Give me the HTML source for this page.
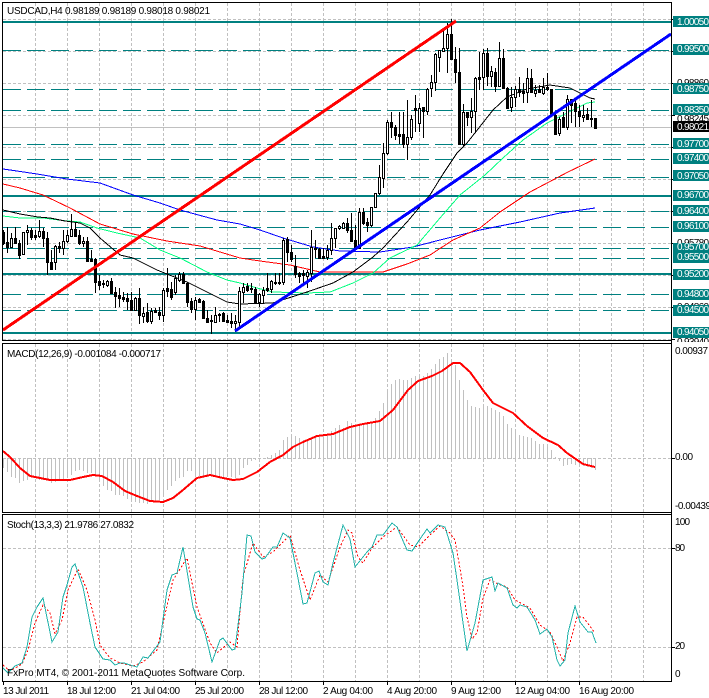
<!DOCTYPE html>
<html><head><meta charset="utf-8"><title>USDCAD,H4</title>
<style>
html,body{margin:0;padding:0;background:#fff;width:709px;height:698px;overflow:hidden}
svg{display:block}
text{font-family:"Liberation Sans",Arial,sans-serif;font-size:10px;fill:#000}
.w{fill:#fff}
.l{fill:none;stroke-width:1;shape-rendering:crispEdges}
</style></head><body>
<svg width="709" height="698" viewBox="0 0 709 698" xmlns="http://www.w3.org/2000/svg">
<rect width="709" height="698" fill="#fff"/>
<!-- grid -->
<path class="l" stroke="#c0c0c0" stroke-dasharray="3 2" d="M35.5 3V340M67.5 3V340M99.5 3V340M131.5 3V340M163.5 3V340M195.5 3V340M227.5 3V340M259.5 3V340M291.5 3V340M323.5 3V340M355.5 3V340M387.5 3V340M419.5 3V340M451.5 3V340M483.5 3V340M515.5 3V340M547.5 3V340M579.5 3V340M611.5 3V340M643.5 3V340
M35.5 344V512M67.5 344V512M99.5 344V512M131.5 344V512M163.5 344V512M195.5 344V512M227.5 344V512M259.5 344V512M291.5 344V512M323.5 344V512M355.5 344V512M387.5 344V512M419.5 344V512M451.5 344V512M483.5 344V512M515.5 344V512M547.5 344V512M579.5 344V512M611.5 344V512M643.5 344V512
M35.5 515V681M67.5 515V681M99.5 515V681M131.5 515V681M163.5 515V681M195.5 515V681M227.5 515V681M259.5 515V681M291.5 515V681M323.5 515V681M355.5 515V681M387.5 515V681M419.5 515V681M451.5 515V681M483.5 515V681M515.5 515V681M547.5 515V681M579.5 515V681M611.5 515V681M643.5 515V681
M3 19.5H671M3 51.5H671M3 83.5H671M3 115.5H671M3 147.5H671M3 179.5H671M3 211.5H671M3 243.5H671M3 275.5H671M3 307.5H671M3 339.5H671M3 458.5H671M3 548.5H671M3 647.5H671"/>
<!-- price levels -->
<path class="l" stroke="#008080" stroke-dasharray="18 6" d="M3 50.5H671M3 89.5H671M3 110.5H671M3 144.5H671M3 159.5H671M3 177.5H671M3 211.5H671M3 227.5H671M3 248.5H671M3 258.5H671M3 294.5H671M3 310.5H671"/>
<path fill="#008080" d="M3 21H671V23H3zM3 195H671V197H3zM3 273H671V275H3zM3 332H671V334H3z"/>
<path class="l" stroke="#c0c0c0" d="M3 127.5H671"/>
<!-- MACD histogram -->
<path class="l" stroke="#c0c0c0" d="M3.5 458V468M7.5 458V472M11.5 458V477M15.5 458V478M19.5 458V483M23.5 458V481M27.5 458V480M31.5 458V477M35.5 458V477M39.5 458V480M43.5 458V480M47.5 458V480M51.5 458V483M55.5 458V482M59.5 458V481M63.5 458V480M67.5 458V478M71.5 458V475M75.5 458V471M79.5 458V470M83.5 458V471M87.5 458V473M91.5 458V473M95.5 458V476M99.5 458V480M103.5 458V486M107.5 458V490M111.5 458V491M115.5 458V495M119.5 458V495M123.5 458V496M127.5 458V499M131.5 458V501M135.5 458V502M139.5 458V503M143.5 458V503M147.5 458V504M151.5 458V502M155.5 458V501M159.5 458V500M163.5 458V495M167.5 458V490M171.5 458V486M175.5 458V481M179.5 458V478M183.5 458V477M187.5 458V471M191.5 458V471M195.5 458V475M199.5 458V476M203.5 458V478M207.5 458V477M211.5 458V475M215.5 458V477M219.5 458V477M223.5 458V478M227.5 458V476M231.5 458V477M235.5 458V478M239.5 458V475M243.5 458V468M247.5 458V465M251.5 458V461M255.5 458V460M259.5 458V459
M267.5 459V457M271.5 459V455M275.5 459V453M279.5 459V450M283.5 459V440M287.5 459V437M291.5 459V434M295.5 459V436M299.5 459V438M303.5 459V440M307.5 459V439M311.5 459V438M315.5 459V436M319.5 459V435M323.5 459V435M327.5 459V435M331.5 459V431M335.5 459V428M339.5 459V425M343.5 459V428M347.5 459V421M351.5 459V423M355.5 459V425M359.5 459V425M363.5 459V425M367.5 459V423M371.5 459V423M375.5 459V418M379.5 459V411M383.5 459V403M387.5 459V391M391.5 459V384M395.5 459V380M399.5 459V379M403.5 459V380M407.5 459V380M411.5 459V378M415.5 459V376M419.5 459V375M423.5 459V376M427.5 459V373M431.5 459V369M435.5 459V364M439.5 459V359M443.5 459V357M447.5 459V353M451.5 459V360M455.5 459V365M459.5 459V380M463.5 459V390M467.5 459V400M471.5 459V406M475.5 459V407M479.5 459V408M483.5 459V404M487.5 459V406M491.5 459V408M495.5 459V410M499.5 459V412M503.5 459V416M507.5 459V424M511.5 459V428M515.5 459V430M519.5 459V435M523.5 459V436M527.5 459V437M531.5 459V438M535.5 459V441M539.5 459V444M543.5 459V444M547.5 459V445M551.5 459V450M555.5 459V457
M559.5 458V461M563.5 458V466M567.5 458V465M571.5 458V464M575.5 458V465M579.5 458V466M583.5 458V466M587.5 458V467M591.5 458V468M595.5 458V470"/>
<!-- moving averages -->
<polyline class="l" stroke="#0000ff" points="3,169 17,171 37,174 67,179 100,183 133,195 160,203 180,210 217,220 240,224 260,230 283,238 313,247 340,251 380,252 413,247 440,240 480,230 520,222 560,213 595,208"/>
<polyline class="l" stroke="#ff0000" points="3,184 20,188 43,195 70,208 100,224 133,234 167,241 200,246 240,258 260,261 290,265 320,272 373,272 383,272 407,264 430,255 453,240 480,228 500,212 530,192 568,172 595,159"/>
<polyline class="l" stroke="#00ff7f" points="3,216 20,218 43,218 67,221 80,222 97,228 117,233 140,238 160,250 180,258 207,272 227,280 240,283 257,288 273,292 307,293 330,292 353,283 373,273 390,258 417,245 440,218 460,195 485,175 503,158 523,140 547,123 567,113 587,103 595,102"/>
<polyline class="l" stroke="#000" points="3,210 20,214 38,217 50,218 65,221 80,223 90,228 100,238 120,255 133,258 157,270 167,274 187,282 207,292 227,302 240,304 273,303 307,292 333,283 353,272 373,257 383,248 407,222 430,195 443,174 457,153 467,143 493,110 507,97 527,89 550,85 570,88 590,98 595,99"/>
<!-- candle wicks -->
<path class="l" stroke="#000" d="M3.5 230V245M7.5 227V253M11.5 233V248M15.5 227V243M19.5 240V259M23.5 232V255M27.5 225V245M31.5 228V240M35.5 230V240M39.5 220V238M43.5 228V247M47.5 232V275M51.5 250V270M55.5 245V270M59.5 242V253M63.5 230V255M67.5 230V243M71.5 214V237M75.5 222V237M79.5 230V245M83.5 237V247M87.5 237V262M91.5 250V262M95.5 258V293M99.5 275V290M103.5 280V288M107.5 280V287M111.5 278V293M115.5 287V308M119.5 288V307M123.5 292V302M127.5 293V310M131.5 292V311M135.5 297V311M139.5 288V324M143.5 307V323M147.5 303V323M151.5 308V324M155.5 308V313M159.5 307V320M163.5 288V322M167.5 268V297M171.5 282V300M175.5 275V295M179.5 272V282M183.5 272V283M187.5 282V307M191.5 298V313M195.5 297V320M199.5 298V303M203.5 300V319M207.5 310V323M211.5 315V334M215.5 307V323M219.5 313V322M223.5 312V322M227.5 315V323M231.5 313V328M235.5 315V332M239.5 287V328M243.5 283V303M247.5 283V292M251.5 283V293M255.5 287V303M259.5 293V307M263.5 287V303M267.5 273V292M271.5 280V293M275.5 273V285M279.5 273V285M283.5 238V285M287.5 237V262M291.5 245V262M295.5 255V278M299.5 272V283M303.5 270V283M307.5 270V288M311.5 230V282M315.5 240V258M319.5 248V258M323.5 248V258M327.5 245V260M331.5 223V255M335.5 228V248M339.5 225V230M343.5 222V228M347.5 218V233M351.5 213V242M355.5 225V248M359.5 208V248M363.5 208V225M367.5 218V232M371.5 207V227M375.5 193V208M379.5 165V195M383.5 143V188M387.5 120V155M391.5 112V138M395.5 125V140M399.5 112V144M403.5 112V148M407.5 100V160M411.5 115V140M415.5 95V132M419.5 103V132M423.5 107V138M427.5 88V115M431.5 75V97M435.5 53V91M439.5 50V72M443.5 28V52M447.5 23V73M451.5 19V60M455.5 47V83M459.5 48V145M463.5 104V147M467.5 112V126M471.5 98V133M475.5 77V133M479.5 52V90M483.5 49V90M487.5 48V86M491.5 66V87M495.5 68V92M499.5 42V87M503.5 49V89M507.5 87V108M511.5 87V112M515.5 86V107M519.5 77V97M523.5 83V103M527.5 68V103M531.5 69V93M535.5 85V97M539.5 85V93M543.5 78V95M547.5 73V91M551.5 89V115M555.5 113V135M559.5 117V136M563.5 112V128M567.5 95V130M571.5 99V123M575.5 100V127M579.5 105V127M583.5 105V122M587.5 108V120M591.5 100V127"/>
<!-- black bodies -->
<path fill="#000" shape-rendering="crispEdges" d="M2 232h3V244h-3zM6 242h3V248h-3zM14 238h3V244h-3zM18 243h3V256h-3zM30 230h3V238h-3zM34 235h3V238h-3zM42 231h3V239h-3zM46 238h3V263h-3zM50 262h3V270h-3zM58 246h3V249h-3zM74 229h3V237h-3zM78 235h3V244h-3zM86 241h3V262h-3zM90 259h3V262h-3zM94 259h3V283h-3zM98 281h3V286h-3zM102 283h3V285h-3zM110 281h3V294h-3zM114 292h3V297h-3zM118 295h3V299h-3zM122 297h3V300h-3zM126 298h3V302h-3zM130 300h3V311h-3zM138 298h3V316h-3zM146 312h3V322h-3zM154 310h3V313h-3zM158 312h3V316h-3zM166 288h3V292h-3zM170 289h3V298h-3zM182 274h3V284h-3zM186 283h3V303h-3zM190 301h3V310h-3zM198 299h3V303h-3zM202 301h3V319h-3zM206 318h3V323h-3zM210 320h3V322h-3zM218 314h3V316h-3zM222 313h3V322h-3zM226 320h3V323h-3zM230 321h3V324h-3zM246 286h3V291h-3zM250 288h3V290h-3zM254 289h3V303h-3zM266 288h3V291h-3zM274 282h3V284h-3zM278 282h3V284h-3zM286 239h3V253h-3zM290 252h3V260h-3zM294 266h3V275h-3zM298 273h3V277h-3zM302 273h3V276h-3zM314 248h3V250h-3zM318 249h3V259h-3zM322 256h3V259h-3zM346 223h3V231h-3zM350 230h3V242h-3zM354 240h3V249h-3zM362 212h3V224h-3zM366 222h3V226h-3zM390 122h3V128h-3zM394 127h3V136h-3zM398 134h3V137h-3zM402 134h3V145h-3zM414 108h3V111h-3zM422 107h3V112h-3zM450 34h3V60h-3zM454 59h3V73h-3zM458 72h3V145h-3zM466 112h3V118h-3zM478 77h3V80h-3zM486 53h3V77h-3zM494 72h3V87h-3zM502 58h3V89h-3zM506 88h3V109h-3zM518 89h3V93h-3zM522 91h3V94h-3zM530 78h3V93h-3zM538 89h3V93h-3zM546 87h3V90h-3zM550 89h3V116h-3zM554 115h3V135h-3zM562 117h3V128h-3zM570 99h3V106h-3zM574 103h3V112h-3zM578 111h3V117h-3zM586 114h3V120h-3zM590 118h3V120h-3zM594 118h3V129h-3z"/>
<!-- white bodies -->
<path fill="#fff" stroke="#000" stroke-width="1" shape-rendering="crispEdges" d="M10.5 238.5h2V247.5h-2zM22.5 232.5h2V254.5h-2zM26.5 230.5h2V232.5h-2zM38.5 231.5h2V236.5h-2zM54.5 246.5h2V262.5h-2zM62.5 241.5h2V248.5h-2zM66.5 235.5h2V241.5h-2zM70.5 229.5h2V236.5h-2zM82.5 241.5h2V243.5h-2zM106.5 281.5h2V285.5h-2zM134.5 298.5h2V310.5h-2zM142.5 313.5h2V316.5h-2zM150.5 311.5h2V321.5h-2zM162.5 290.5h2V315.5h-2zM174.5 278.5h2V292.5h-2zM178.5 274.5h2V280.5h-2zM194.5 300.5h2V309.5h-2zM214.5 315.5h2V322.5h-2zM234.5 321.5h2V323.5h-2zM238.5 291.5h2V322.5h-2zM242.5 287.5h2V292.5h-2zM258.5 294.5h2V302.5h-2zM262.5 290.5h2V295.5h-2zM270.5 281.5h2V289.5h-2zM282.5 240.5h2V282.5h-2zM306.5 272.5h2V276.5h-2zM310.5 247.5h2V273.5h-2zM326.5 250.5h2V257.5h-2zM330.5 238.5h2V250.5h-2zM334.5 228.5h2V238.5h-2zM338.5 226.5h2V228.5h-2zM342.5 223.5h2V228.5h-2zM358.5 212.5h2V248.5h-2zM370.5 207.5h2V225.5h-2zM374.5 193.5h2V207.5h-2zM378.5 177.5h2V193.5h-2zM382.5 153.5h2V178.5h-2zM386.5 122.5h2V153.5h-2zM406.5 137.5h2V144.5h-2zM410.5 119.5h2V137.5h-2zM418.5 108.5h2V123.5h-2zM426.5 89.5h2V111.5h-2zM430.5 82.5h2V88.5h-2zM434.5 54.5h2V82.5h-2zM438.5 50.5h2V57.5h-2zM442.5 48.5h2V51.5h-2zM446.5 34.5h2V48.5h-2zM462.5 112.5h2V144.5h-2zM470.5 111.5h2V117.5h-2zM474.5 78.5h2V111.5h-2zM482.5 53.5h2V77.5h-2zM490.5 71.5h2V76.5h-2zM498.5 58.5h2V86.5h-2zM510.5 97.5h2V107.5h-2zM514.5 89.5h2V97.5h-2zM526.5 78.5h2V92.5h-2zM534.5 90.5h2V93.5h-2zM542.5 87.5h2V93.5h-2zM558.5 119.5h2V133.5h-2zM566.5 99.5h2V127.5h-2zM582.5 115.5h2V117.5h-2z"/>
<!-- trend lines -->
<line x1="3" y1="330" x2="456" y2="21" stroke="#ff0000" stroke-width="3" shape-rendering="crispEdges"/>
<line x1="235" y1="331" x2="671" y2="34" stroke="#0000ff" stroke-width="3" shape-rendering="crispEdges"/>
<!-- MACD signal -->
<polyline fill="none" stroke="#ff0000" stroke-width="2" shape-rendering="crispEdges" points="3,451 10,457 20,468 30,476 40,478 50,480 70,480 83,477 93,475 102,476 113,482 125,491 137,496 150,501 163,502 173,498 183,490 197,478 210,475 223,478 233,480 243,479 257,472 270,462 283,455 293,447 303,442 317,436 333,434 350,427 363,424 380,421 393,410 408,390 418,381 432,376 442,371 453,363 460,363 470,372 483,390 493,403 513,413 527,426 543,438 558,445 567,453 583,464 595,467"/>
<!-- Stochastic -->
<polyline class="l" stroke="#ff0000" stroke-dasharray="2 2" points="3,665 10,671 22,664 28,650 35,623 43,605 50,613 55,634 62,620 68,590 78,569 87,590 95,620 100,645 110,658 120,663 133,666 143,662 157,650 163,623 173,580 187,558 197,607 210,643 217,653 230,642 237,647 243,577 253,543 263,557 273,552 290,535 300,570 310,600 320,575 328,582 340,547 348,530 352,533 358,557 363,563 372,548 383,537 397,527 410,545 418,547 430,535 440,526 450,533 455,540 462,580 467,617 472,639 477,633 483,598 490,580 498,584 507,587 515,600 530,608 540,625 550,632 557,647 563,661 570,643 577,617 583,617 595,633"/>
<polyline class="l" stroke="#20b2aa" points="3,668 8,673 15,666 22,663 27,647 32,617 37,607 43,598 52,642 58,632 63,597 67,585 72,567 75,564 83,587 90,623 95,647 103,659 110,660 115,665 120,663 124,663 130,665 137,667 143,657 148,658 160,642 167,590 172,575 177,573 183,547 188,577 193,607 197,619 200,620 205,633 212,662 220,640 223,638 232,650 235,649 242,593 247,535 251,536 255,552 262,559 265,558 273,547 277,547 283,533 290,538 295,563 303,604 307,603 315,573 319,571 323,582 328,585 333,563 343,525 350,539 355,567 367,552 372,547 377,535 383,535 392,523 397,527 407,550 412,551 420,539 427,529 430,533 438,525 445,527 453,553 458,587 467,651 475,623 483,580 492,577 495,591 498,583 507,588 513,605 517,608 520,605 527,607 535,620 540,634 547,629 552,637 557,660 560,666 565,660 568,633 575,606 580,622 588,632 592,632 596,643"/>
<!-- hidden axis text -->
<text x="677" y="86" textLength="32">0.98860</text>
<text x="677" y="122" textLength="32">0.98245</text>
<text x="677" y="246" textLength="32">0.95780</text>
<text x="677" y="310" textLength="32">0.94860</text>
<text x="677" y="345" textLength="32">0.93940</text>
<rect x="672" y="342" width="37" height="6" fill="#fff"/>
<!-- frames -->
<path class="l" stroke="#000" d="M2.5 2.5H671.5V340.5H2.5zM2.5 343.5H671.5V512.5H2.5zM2.5 514.5H671.5V681.5H2.5z"/>
<path class="l" stroke="#000" d="M671.5 2V682M671.5 115.5H675M671.5 179.5H675M671.5 243.5H675M671.5 307.5H675M671.5 51.5H675M671.5 19.5H675M671.5 83.5H675M671.5 147.5H675M671.5 211.5H675M671.5 275.5H675M671.5 339.5H675M671.5 458.5H675M671.5 548.5H675M671.5 647.5H675
M3.5 682V685M67.5 682V685M131.5 682V685M195.5 682V685M259.5 682V685M323.5 682V685M387.5 682V685M451.5 682V685M515.5 682V685M579.5 682V685"/>
<!-- price labels -->
<g fill="#008080">
<rect x="673" y="16" width="36" height="11"/><rect x="673" y="44" width="36" height="11"/><rect x="673" y="83" width="36" height="11"/><rect x="673" y="104" width="36" height="11"/><rect x="673" y="138" width="36" height="11"/><rect x="673" y="153" width="36" height="11"/><rect x="673" y="170" width="36" height="11"/><rect x="673" y="190" width="36" height="11"/><rect x="673" y="205" width="36" height="11"/><rect x="673" y="221" width="36" height="11"/><rect x="673" y="243" width="36" height="10"/><rect x="673" y="253" width="36" height="10"/><rect x="673" y="269" width="36" height="11"/><rect x="673" y="289" width="36" height="11"/><rect x="673" y="305" width="36" height="11"/><rect x="673" y="327" width="36" height="11"/>
</g>
<rect x="673" y="121" width="36" height="11" fill="#000"/>
<g>
<text class="w" x="677" y="25" textLength="32">1.00050</text>
<text class="w" x="677" y="52" textLength="32">0.99500</text>
<text class="w" x="677" y="92" textLength="32">0.98750</text>
<text class="w" x="677" y="113" textLength="32">0.98350</text>
<text class="w" x="677" y="130" textLength="32">0.98021</text>
<text class="w" x="677" y="147" textLength="32">0.97700</text>
<text class="w" x="677" y="161" textLength="32">0.97400</text>
<text class="w" x="677" y="179" textLength="32">0.97050</text>
<text class="w" x="677" y="198" textLength="32">0.96700</text>
<text class="w" x="677" y="214" textLength="32">0.96400</text>
<text class="w" x="677" y="229" textLength="32">0.96100</text>
<text class="w" x="677" y="250" textLength="32">0.95700</text>
<text class="w" x="677" y="260" textLength="32">0.95500</text>
<text class="w" x="677" y="277" textLength="32">0.95200</text>
<text class="w" x="677" y="297" textLength="32">0.94800</text>
<text class="w" x="677" y="313" textLength="32">0.94500</text>
<text class="w" x="677" y="335" textLength="32">0.94050</text>
</g>
<!-- indicator axis -->
<text x="675" y="354" textLength="33">0.00937</text>
<text x="675" y="460" textLength="18">0.00</text>
<text x="675" y="509" textLength="36">-0.00439</text>
<text x="675" y="525" textLength="15">100</text>
<text x="675" y="551" textLength="10">80</text>
<text x="675" y="649" textLength="10">20</text>
<text x="675" y="677">0</text>
<!-- titles -->
<text x="7" y="14" textLength="203">USDCAD,H4  0.98189 0.98189 0.98018 0.98021</text>
<text x="7" y="357" textLength="154">MACD(12,26,9) -0.001084 -0.000717</text>
<text x="7" y="528" textLength="127">Stoch(13,3,3) 21.9786 27.0832</text>
<text x="7" y="676" textLength="238">FxPro MT4, © 2001-2011 MetaQuotes Software Corp.</text>
<!-- time axis -->
<text x="3" y="694" textLength="46">13 Jul 2011</text>
<text x="67" y="694" textLength="49">18 Jul 12:00</text>
<text x="131" y="694" textLength="49">21 Jul 04:00</text>
<text x="195" y="694" textLength="49">25 Jul 20:00</text>
<text x="259" y="694" textLength="49">28 Jul 12:00</text>
<text x="323" y="694" textLength="50">2 Aug 04:00</text>
<text x="387" y="694" textLength="50">4 Aug 20:00</text>
<text x="451" y="694" textLength="50">9 Aug 12:00</text>
<text x="515" y="694" textLength="55">12 Aug 04:00</text>
<text x="579" y="694" textLength="55">16 Aug 20:00</text>
</svg>
</body></html>
